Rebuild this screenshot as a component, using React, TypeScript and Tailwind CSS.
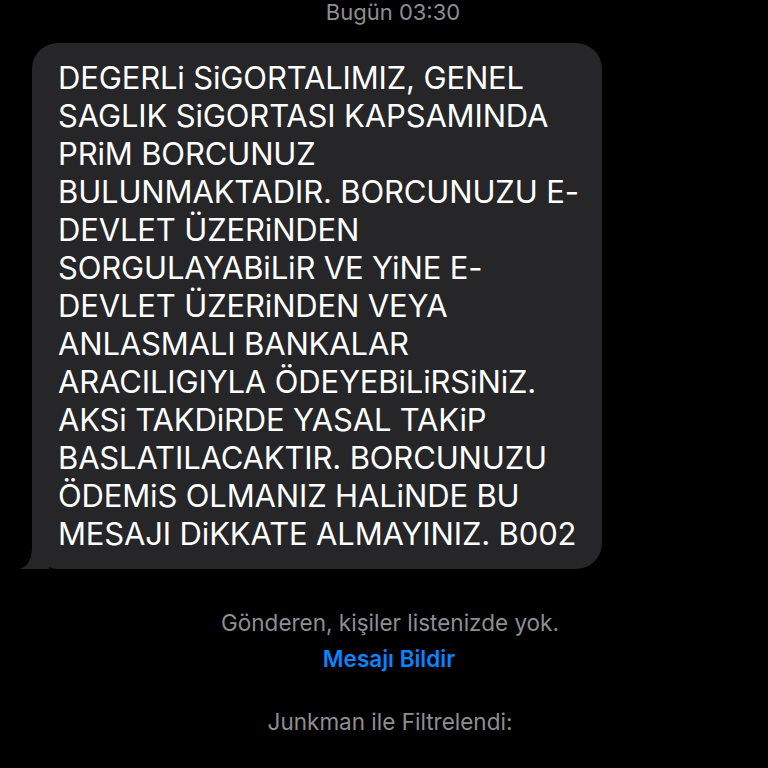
const lines = [
  'DEGERLi SiGORTALIMIZ, GENEL',
  'SAGLIK SiGORTASI KAPSAMINDA',
  'PRiM BORCUNUZ',
  'BULUNMAKTADIR. BORCUNUZU E-',
  'DEVLET ÜZERiNDEN',
  'SORGULAYABiLiR VE YiNE E-',
  'DEVLET ÜZERiNDEN VEYA',
  'ANLASMALI BANKALAR',
  'ARACILIGIYLA ÖDEYEBiLiRSiNiZ.',
  'AKSi TAKDiRDE YASAL TAKiP',
  'BASLATILACAKTIR. BORCUNUZU',
  'ÖDEMiS OLMANIZ HALiNDE BU',
  'MESAJI DiKKATE ALMAYINIZ. B002',
];

export default function App() {
  return (
    <div className="w-[768px] h-[768px] bg-black overflow-hidden font-['Inter','Roboto',sans-serif]">
      <div className="text-center text-[#8e8e93] text-[22px] leading-[26px] pl-[18px] -mt-[1px]">
        Bugün 03:30
      </div>

      {/* bubble */}
      <div className="relative ml-[32px] mt-[18px] w-[570px]">
        <div className="bg-[#262628] rounded-[26px] pl-[26px] pr-4 pt-[16px] pb-[16px] text-white text-[31px] leading-[38px] tracking-[-0.15px]">
          {lines.map((l, i) => (
            <div key={i} className="whitespace-nowrap">{l}</div>
          ))}
        </div>
        <svg className="absolute left-[-13px] bottom-0" width="30" height="30" viewBox="0 0 30 30">
          <path d="M30 0 L30 30 L0 30 C8 28 12 22 13 10 L13 0 Z" fill="#262628" />
        </svg>
      </div>

      <div className="mt-[40px] text-center text-[#8e8e93] text-[22.5px] leading-[28px] pl-[12px]">
        Gönderen, kişiler listenizde yok.
      </div>
      <div className="mt-[8px] text-center text-[#0a84ff] text-[22.5px] font-semibold leading-[28px] pl-[10px]">
        Mesajı Bildir
      </div>
      <div className="mt-[35px] text-center text-[#8e8e93] text-[22.5px] leading-[28px] pl-[12px]">
        Junkman ile Filtrelendi:
      </div>
    </div>
  );
}
